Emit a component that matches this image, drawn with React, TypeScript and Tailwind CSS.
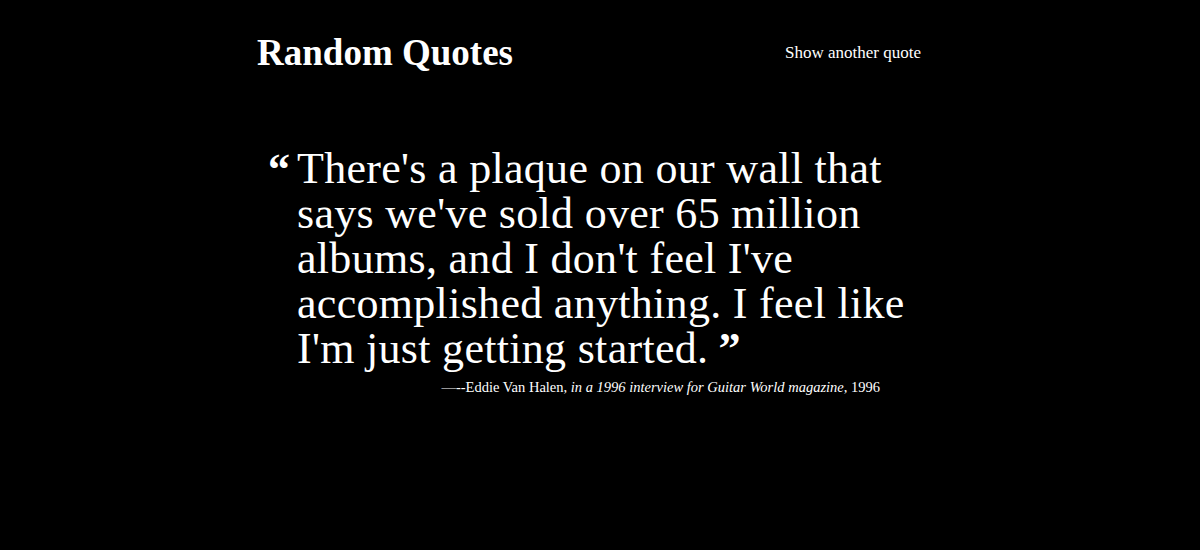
import React from 'react'

const serif = { fontFamily: '"Liberation Serif", "DejaVu Serif", serif' }

const lines = [
  "There's a plaque on our wall that",
  "says we've sold over 65 million",
  "albums, and I don't feel I've",
  "accomplished anything. I feel like",
  "I'm just getting started.",
]

export default function App() {
  return (
    <div className="min-h-[550px] w-full bg-black text-white" style={serif}>
      <div className="mx-auto w-[700px] pl-[7px] pr-[29px]">
        <header className="flex items-center justify-between pt-[33px]">
          <h1 className="text-[37px] font-bold leading-[40px]">Random Quotes</h1>
          <button className="text-[17px] leading-5">Show another quote</button>
        </header>

        <div className="mt-[73px] flex pl-[11px]">
          <span className="w-[29px] shrink-0 pt-[1px] text-[44px] font-bold leading-[45px]">&ldquo;</span>
          <div className="w-[596px]">
            <p className="text-[44px] leading-[45px] tracking-[0.3px] whitespace-nowrap">
              {lines.map((l, i) => (
                <span key={i}>
                  {l}
                  {i === lines.length - 1 ? (
                    <span className="ml-[10px] font-bold">&rdquo;</span>
                  ) : (
                    <br />
                  )}
                </span>
              ))}
            </p>
            <p className="mt-[8px] pr-[13px] text-right text-[14.5px] leading-4">
              &mdash;--Eddie Van Halen, <em>in a 1996 interview for Guitar World magazine</em>, 1996
            </p>
          </div>
        </div>
      </div>
    </div>
  )
}
